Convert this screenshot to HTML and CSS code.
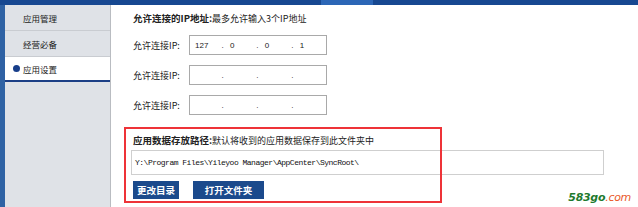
FILE: index.html
```html
<!DOCTYPE html>
<html lang="zh-CN">
<head>
<meta charset="utf-8">
<title>应用设置</title>
<link rel="stylesheet" href="styles.css">
</head>
<body>
<div class="topbar"><span class="topbar-gap"></span><span class="topbar-hi"></span></div>
<div class="layout">
  <div class="strip"></div>
  <nav class="sidebar">
    <div class="item">应用管理</div>
    <div class="item">经营必备</div>
    <div class="item active"><span class="dot"></span>应用设置</div>
  </nav>
  <main class="main">
    <div class="title"><b>允许连接的IP地址:</b>最多允许输入3个IP地址</div>
    <div class="row">
      <span class="label">允许连接IP:</span>
      <div class="ip"><span class="seg">127</span><span class="sep">.</span><span class="seg">0</span><span class="sep">.</span><span class="seg">0</span><span class="sep">.</span><span class="seg">1</span></div>
    </div>
    <div class="row">
      <span class="label">允许连接IP:</span>
      <div class="ip"><span class="seg"></span><span class="sep">.</span><span class="seg"></span><span class="sep">.</span><span class="seg"></span><span class="sep">.</span><span class="seg"></span></div>
    </div>
    <div class="row">
      <span class="label">允许连接IP:</span>
      <div class="ip"><span class="seg"></span><span class="sep">.</span><span class="seg"></span><span class="sep">.</span><span class="seg"></span><span class="sep">.</span><span class="seg"></span></div>
    </div>
    <section class="pathbox">
      <div class="highlight"></div>
      <div class="title"><b>应用数据存放路径:</b>默认将收到的应用数据保存到此文件夹中</div>
      <div class="path">Y:\Program Files\Yileyoo Manager\AppCenter\SyncRoot\</div>
      <div class="buttons">
        <button class="btn small">更改目录</button>
        <button class="btn wide">打开文件夹</button>
      </div>
    </section>
    <div class="watermark"><span class="wm-a">583go</span><span class="wm-b">.com</span></div>
  </main>
</div>
</body>
</html>
```
FILE: styles.css
```css
* { box-sizing: border-box; }
html, body { margin: 0; padding: 0; }
body {
  width: 638px;
  height: 207px;
  overflow: hidden;
  background: #fff;
  font-family: "Noto Sans CJK SC", "DejaVu Sans", sans-serif;
  font-size: 9px;
  color: #222;
}
.topbar {
  height: 5px;
  background: #174891;
  display: flex;
}
.topbar-gap { width: 321px; }
.topbar-hi { width: 52px; background: #2c66b6; }
.layout {
  display: flex;
  height: 202px;
}
.strip {
  width: 5px;
  background: #2f62a4;
}
.sidebar {
  width: 106px;
  background: #dfe2e7;
  border-right: 1px solid #b9bcc1;
  display: flex;
  flex-direction: column;
}
.item {
  height: 26px;
  border-bottom: 1px solid #c9ccd1;
  padding-left: 18px;
  display: flex;
  align-items: center;
  font-size: 8.5px;
  color: #222;
}
.item.active {
  background: #fff;
  height: 25px;
  border-bottom: 2px solid #1c3f86;
  padding-left: 8px;
}
.dot {
  width: 7px;
  height: 7px;
  border-radius: 50%;
  background: #173e8a;
  margin-right: 3px;
}
.main {
  flex: 1;
  position: relative;
  padding-left: 22px;
}
.title {
  font-size: 9px;
  height: 14px;
  line-height: 14px;
  margin-top: 6px;
  white-space: nowrap;
}
.title b { font-size: 9.5px; }
.row {
  display: flex;
  align-items: center;
  height: 20px;
  margin-top: 10px;
}
.row:first-of-type { margin-top: 9px; }
.label {
  width: 56px;
  font-size: 9px;
}
.ip {
  width: 138px;
  height: 20px;
  border: 1px solid #a9a9a9;
  display: flex;
  align-items: center;
  padding-left: 5px;
  font-family: "Liberation Sans", sans-serif;
  font-size: 8px;
}
.seg { width: 27px; }
.sep { width: 8.7px; }
.pathbox {
  position: relative;
  margin-top: 12px;
  margin-left: -9px;
  padding: 4px 0 0 9px;
  height: 76px;
}
.highlight {
  position: absolute;
  left: 0;
  top: 0;
  width: 318px;
  height: 76px;
  border: 2px solid #ee3338;
  pointer-events: none;
}
.pathbox .title { margin-top: 2px; }
.path {
  margin-top: 3px;
  margin-left: -2px;
  width: 473px;
  height: 25px;
  border: 1px solid #cfcfcf;
  display: flex;
  align-items: center;
  padding-left: 3px;
  font-family: "Liberation Mono", monospace;
  font-size: 8px;
  letter-spacing: -0.5px;
  color: #111;
}
.buttons {
  display: flex;
  gap: 14px;
  margin-top: 6px;
}
.btn {
  height: 18px;
  border: none;
  background: #1b4a8c;
  color: #fff;
  font-family: "Noto Sans CJK SC", sans-serif;
  font-weight: bold;
  font-size: 9.5px;
  padding: 0;
  line-height: 18px;
}
.btn.small { width: 46px; }
.btn.wide { width: 71px; }
.watermark {
  position: absolute;
  right: 7px;
  bottom: 3px;
  font-family: "DejaVu Sans", sans-serif;
  font-style: italic;
  font-weight: bold;
  font-size: 11px;
  letter-spacing: -0.3px;
}
.wm-a { color: #1d7a2e; }
.wm-b { color: #ea5a2c; font-weight: normal; }
```
